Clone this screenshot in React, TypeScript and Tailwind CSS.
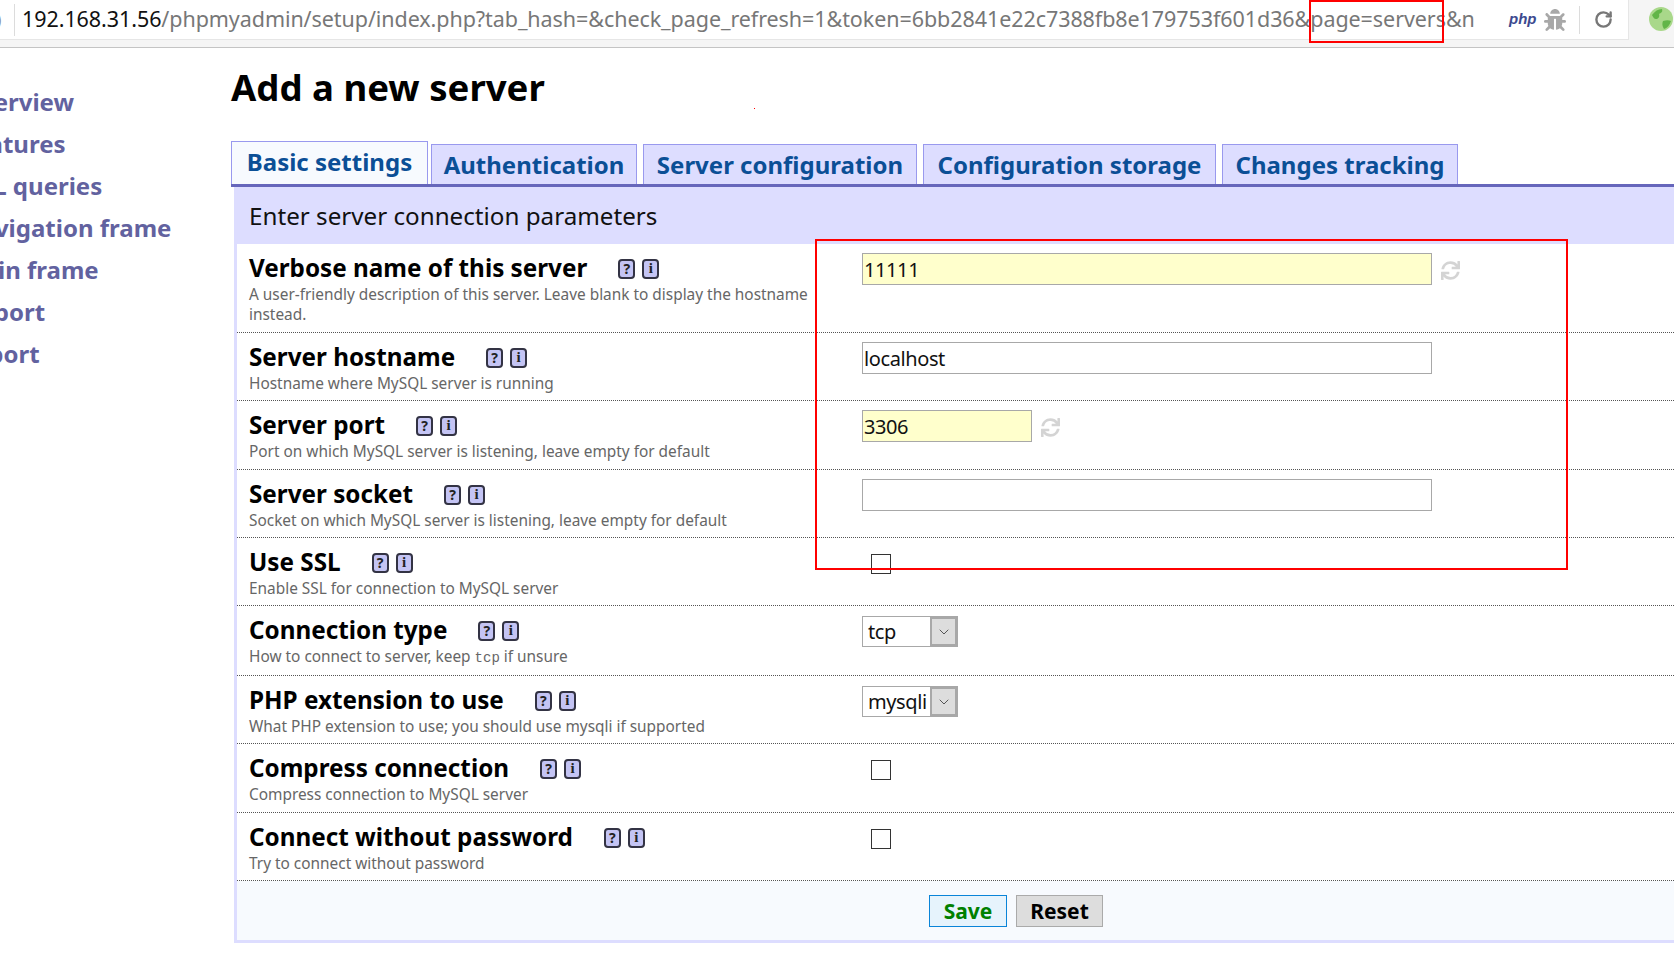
import { FaBug, FaSync } from "react-icons/fa";
import { RotateCw, ChevronDown } from "lucide-react";

const NAV = ["Overview", "Features", "SQL queries", "Navigation frame", "Main frame", "Import", "Export"];

const TABS = [
  { label: "Basic settings", box: "w-[197px] h-[43px] bg-[#f7fafe] pb-[3px]", gap: "mr-[3px]" },
  { label: "Authentication", box: "w-[206px] h-[40px] bg-[#ddddff] pt-[1px]", gap: "mr-[6px]" },
  { label: "Server configuration", box: "w-[274px] h-[40px] bg-[#ddddff] pt-[1px]", gap: "mr-[6px]" },
  { label: "Configuration storage", box: "w-[293px] h-[40px] bg-[#ddddff] pt-[1px]", gap: "mr-[6px]" },
  { label: "Changes tracking", box: "w-[236px] h-[40px] bg-[#ddddff] pt-[1px]", gap: "" },
];

function Hints() {
  return (
    <span className="flex gap-[7px]">
      <span className="flex h-[20px] w-[17px] items-center justify-center rounded-[4px] border-2 border-[#333344] bg-[#c4c4f4] text-[14px] font-bold leading-none text-[#222]">?</span>
      <span className="flex h-[20px] w-[17px] items-center justify-center rounded-[4px] border-2 border-[#333344] bg-[#c4c4f4] font-['Liberation_Serif',serif] text-[15px] font-bold leading-none text-[#222]">i</span>
    </span>
  );
}

function Refresh() {
  return <FaSync className="ml-[9px] mt-[2px] text-[#d4d4d4]" size={19} />;
}

function TextField({ value, tint, small, reset }: { value: string; tint?: boolean; small?: boolean; reset?: boolean }) {
  return (
    <div className="flex items-center">
      <div className={`flex h-[32px] items-center border border-[#a8a8a8] pl-[1px] pt-[1px] text-[20px] tracking-[-0.4px] text-[#111] ${small ? "w-[170px]" : "w-[570px]"} ${tint ? "bg-[#ffffcc]" : "bg-white"}`}>
        {value}
      </div>
      {reset && <Refresh />}
    </div>
  );
}

function Select({ value }: { value: string }) {
  return (
    <div className="mt-[1px] flex h-[31px] w-[96px] border border-[#a8a8a8] bg-white text-[20px] tracking-[-0.4px] text-[#111]">
      <div className="flex flex-1 items-center pl-[5px]">{value}</div>
      <div className="flex w-[27px] items-center justify-center border-2 border-[#a8a8a8] bg-[#dddddd] text-[#555]">
        <ChevronDown size={16} strokeWidth={1.5} />
      </div>
    </div>
  );
}

function Check() {
  return <div className="ml-[9px] mt-[7px] h-[20px] w-[20px] border border-[#333] bg-white" />;
}

const ROWS = [
  { label: "Verbose name of this server", h: "h-[89px]", field: <TextField value="11111" tint reset />, desc: <>A user-friendly description of this server. Leave blank to display the hostname instead.</> },
  { label: "Server hostname", h: "h-[68px]", field: <TextField value="localhost" />, desc: <>Hostname where MySQL server is running</> },
  { label: "Server port", h: "h-[69px]", field: <TextField value="3306" tint small reset />, desc: <>Port on which MySQL server is listening, leave empty for default</> },
  { label: "Server socket", h: "h-[68px]", field: <TextField value="" />, desc: <>Socket on which MySQL server is listening, leave empty for default</> },
  { label: "Use SSL", h: "h-[68px]", field: <Check />, desc: <>Enable SSL for connection to MySQL server</> },
  { label: "Connection type", h: "h-[70px]", field: <Select value="tcp" />, desc: <>How to connect to server, keep <code className="font-['Liberation_Mono',monospace] text-[14px]">tcp</code> if unsure</> },
  { label: "PHP extension to use", h: "h-[68px]", field: <Select value="mysqli" />, desc: <>What PHP extension to use; you should use mysqli if supported</> },
  { label: "Compress connection", h: "h-[69px]", field: <Check />, desc: <>Compress connection to MySQL server</> },
  { label: "Connect without password", h: "h-[68px]", field: <Check />, desc: <>Try to connect without password</> },
];

export default function App() {
  return (
    <div className="relative h-[968px] w-[1674px] overflow-hidden bg-white font-['Noto_Sans',sans-serif]">
      <header className="h-[48px] border-b border-[#c4c4c4] bg-[#f5f5f5]">
        <div className="flex h-[40px] w-[1629px] items-center border-r border-b border-[#e6e6e6] bg-white">
          <span className="ml-[-4px] w-[18px] text-[18px] text-[#888]">)</span>
          <div className="h-[32px] w-px bg-[#dcdcdc]" />
          <div className="ml-[7px] w-[1463px] whitespace-nowrap text-[21.5px] tracking-[-0.07px] text-[#777]">
            <span className="text-[#111]">192.168.31.56</span>/phpmyadmin/setup/index.php?tab_hash=&amp;check_page_refresh=1&amp;token=6bb2841e22c7388fb8e179753f601d36&amp;page=servers&amp;n
          </div>
          <span className="ml-[24px] font-['Liberation_Sans',sans-serif] text-[15px] font-bold italic text-[#3d4a8f]">php</span>
          <FaBug className="ml-[7px] text-[#a8a8a8]" size={22} />
          <div className="ml-[13px] h-[28px] w-px bg-[#dcdcdc]" />
          <RotateCw className="ml-[14px] text-[#777]" size={19} strokeWidth={3} />
        </div>
        <svg className="absolute left-[1649px] top-[7px]" width="24" height="24" viewBox="0 0 24 24">
          <circle cx="12" cy="12" r="12" fill="#a9d88a" />
          <path d="M3 8c3-4 6-6 10-6 1 3-1 4-3 5 1 3-1 5-3 5-2 0-3-2-4-4zM14 14c3-1 6-1 8 0-1 4-4 7-7 8-2-3-2-6-1-8z" fill="#62b548" />
        </svg>
      </header>

      <div className="flex">
        <aside className="w-[231px] pt-[33px]">
          <ul className="ml-[-39px] flex flex-col">
            {NAV.map((item) => (
              <li key={item} className="h-[42px] whitespace-nowrap text-[24px] font-bold leading-[42px] text-[#62629f]">
                {item}
              </li>
            ))}
          </ul>
        </aside>

        <main className="min-w-0 flex-1">
          <h1 className="h-[93px] whitespace-nowrap pt-[12px] text-[36.6px] font-bold leading-[54px] text-black">Add a new server</h1>

          <nav className="flex items-end">
            {TABS.map((tab) => (
              <div key={tab.label} className={`flex items-center justify-center border border-b-0 border-[#9999ee] text-[24px] font-bold text-[#0b4f96] ${tab.box} ${tab.gap}`}>
                {tab.label}
              </div>
            ))}
          </nav>

          <div className="h-[3px] bg-[#6666bb]" />

          <section className="ml-[3px] border-b-[3px] border-l-[3px] border-[#ddddff]">
            <div className="flex h-[57px] items-center bg-[#ddddff] pl-[12px] pt-[1px] text-[24.2px] text-[#111]">Enter server connection parameters</div>

            {ROWS.map((row) => (
              <div key={row.label} className={`flex border-b border-dotted border-[#555] pl-[12px] pt-[8px] ${row.h}`}>
                <div className="w-[613px]">
                  <div className="flex h-[33px] items-center">
                    <span className="text-[24.25px] font-bold text-black">{row.label}</span>
                    <span className="ml-[31px]"><Hints /></span>
                  </div>
                  <p className="w-[565px] text-[15.4px] leading-[20px] text-[#666]">{row.desc}</p>
                </div>
                <div className="pt-[1px]">{row.field}</div>
              </div>
            ))}

            <div className="flex h-[59px] items-center justify-start gap-[9px] bg-[#f7fafe] pl-[692px]">
              <button className="h-[32px] w-[78px] border border-[#0a84d8] bg-[#e6f3fc] pt-[1px] text-[21px] font-bold leading-none text-[#008000]">Save</button>
              <button className="h-[32px] w-[87px] border border-[#aaaaaa] bg-[#dddddd] pt-[1px] text-[21px] font-bold leading-none text-black">Reset</button>
            </div>
          </section>
        </main>
      </div>

      <span className="absolute left-[754px] top-[108px] h-px w-px bg-[#ff0000]" />
      <div className="pointer-events-none absolute left-[1309px] top-0 h-[43px] w-[135px] border-2 border-[#ff0000]" />
      <div className="pointer-events-none absolute left-[815px] top-[239px] h-[331px] w-[753px] border-2 border-[#ff0000]" />
    </div>
  );
}
